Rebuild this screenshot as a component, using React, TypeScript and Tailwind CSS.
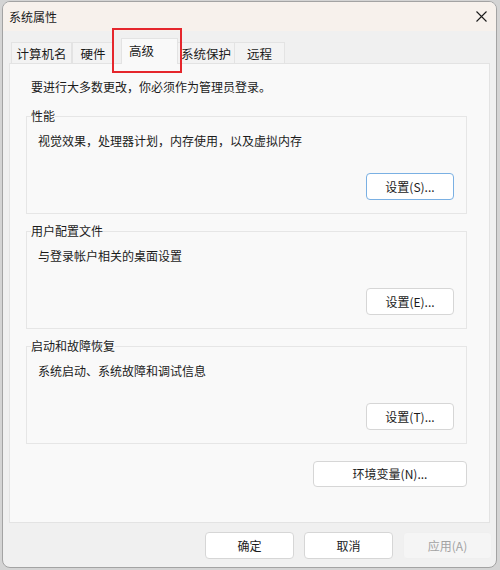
import React from 'react';

const font = "font-['Noto_Sans_CJK_SC','Microsoft_YaHei',sans-serif]";

function Btn({ label, focused, disabled, className = '' }: { label: string; focused?: boolean; disabled?: boolean; className?: string }) {
  const tone = disabled
    ? 'bg-[#f5f5f5] border-[#efefef] text-[#a3a3a3]'
    : focused
      ? 'bg-white border-[#7ab0e3] text-[#1b1b1b]'
      : 'bg-white border-[#d6d6d6] text-[#1b1b1b]';
  return (
    <button className={`h-[27px] rounded-[4px] border text-[12px] leading-[16px] flex items-center justify-center ${tone} ${className}`}>
      {label}
    </button>
  );
}

function Group({ title, desc, button, focused, className = '' }: { title: string; desc: string; button: string; focused?: boolean; className?: string }) {
  return (
    <fieldset className={`border border-[#e6e6e6] pb-[13px] ${className}`}>
      <legend className="ml-[4px] h-[16px] leading-[16px] text-[12px] text-[#1b1b1b]">{title}</legend>
      <p className="mt-[9px] pl-[11px] leading-[16px] text-[12px] text-[#1b1b1b]">{desc}</p>
      <div className="mt-[24px] pr-[12px] flex justify-end">
        <Btn label={button} focused={focused} className="w-[88px]" />
      </div>
    </fieldset>
  );
}

const tabs = [
  { name: '计算机名', w: 'w-[61px]' },
  { name: '硬件', w: 'w-[42px]' },
];

export default function App() {
  return (
    <div className={`relative min-h-screen bg-[#d4d4d4] pt-[1px] pl-[2px] ${font}`}>
      <div className="w-[495px] h-[567px] rounded-[8px] border border-[#a3a3a3] bg-[#f0f0f0] overflow-hidden flex flex-col">
        {/* title bar */}
        <div className="h-[29px] shrink-0 bg-[#f7f1ec] flex items-center justify-between pl-[6px] pr-[9px]">
          <span className="text-[12px] leading-[16px] text-[#1b1b1b]">系统属性</span>
          <svg width="11" height="11" viewBox="0 0 11 11" className="text-[#1b1b1b]">
            <path d="M0.5 0.5 L10.5 10.5 M10.5 0.5 L0.5 10.5" stroke="currentColor" strokeWidth="1.1" fill="none" />
          </svg>
        </div>

        {/* tabs */}
        <div className="pt-[7px] pl-[8px] flex items-end h-[32px] shrink-0">
          {tabs.map((t) => (
            <div
              key={t.name}
              className={`${t.w} h-[21px] pt-[2px] border border-b-0 border-[#e3e3e3] bg-[#f3f3f3] flex items-center justify-center text-[12.5px] text-[#1b1b1b]`}
            >
              {t.name}
            </div>
          ))}
          <div className="ml-[7px] w-[57px] h-[26px] -mb-px relative z-10 border border-b-0 border-[#e3e3e3] bg-[#f9f9f9] flex items-center pl-[7px] text-[12.5px] text-[#1b1b1b]">
            高级
          </div>
          <div className="w-[57px] h-[21px] pt-[2px] border border-b-0 border-l-0 border-[#e3e3e3] bg-[#f3f3f3] flex items-center justify-center text-[12.5px] text-[#1b1b1b]">
            系统保护
          </div>
          <div className="w-[50px] h-[21px] pt-[2px] border border-b-0 border-l-0 border-[#e3e3e3] bg-[#f3f3f3] flex items-center justify-center text-[12.5px] text-[#1b1b1b]">
            远程
          </div>
        </div>

        {/* panel */}
        <div className="mx-[6px] h-[460px] shrink-0 border border-[#e3e3e3] bg-[#f9f9f9] pl-[16px] pr-[22px] pt-[15px] flex flex-col">
          <p className="pl-[5px] leading-[16px] text-[12px] text-[#1b1b1b]">要进行大多数更改，你必须作为管理员登录。</p>
          <Group className="mt-[13px]" title="性能" desc="视觉效果，处理器计划，内存使用，以及虚拟内存" button="设置(S)..." focused />
          <Group className="mt-[9px]" title="用户配置文件" desc="与登录帐户相关的桌面设置" button="设置(E)..." />
          <Group className="mt-[9px]" title="启动和故障恢复" desc="系统启动、系统故障和调试信息" button="设置(T)..." />
          <div className="mt-[17px] flex justify-end">
            <Btn label="环境变量(N)..." className="w-[154px] !h-[26px]" />
          </div>
        </div>

        {/* footer buttons */}
        <div className="pt-[9px] pr-[4px] flex justify-end gap-[10px]">
          <Btn label="确定" className="w-[89px]" />
          <Btn label="取消" className="w-[89px]" />
          <Btn label="应用(A)" disabled className="w-[89px]" />
        </div>
      </div>

      {/* red highlight annotation */}
      <div className="absolute left-[112px] top-[28px] w-[70px] h-[45px] border-2 border-[#e5262c]" />
    </div>
  );
}
